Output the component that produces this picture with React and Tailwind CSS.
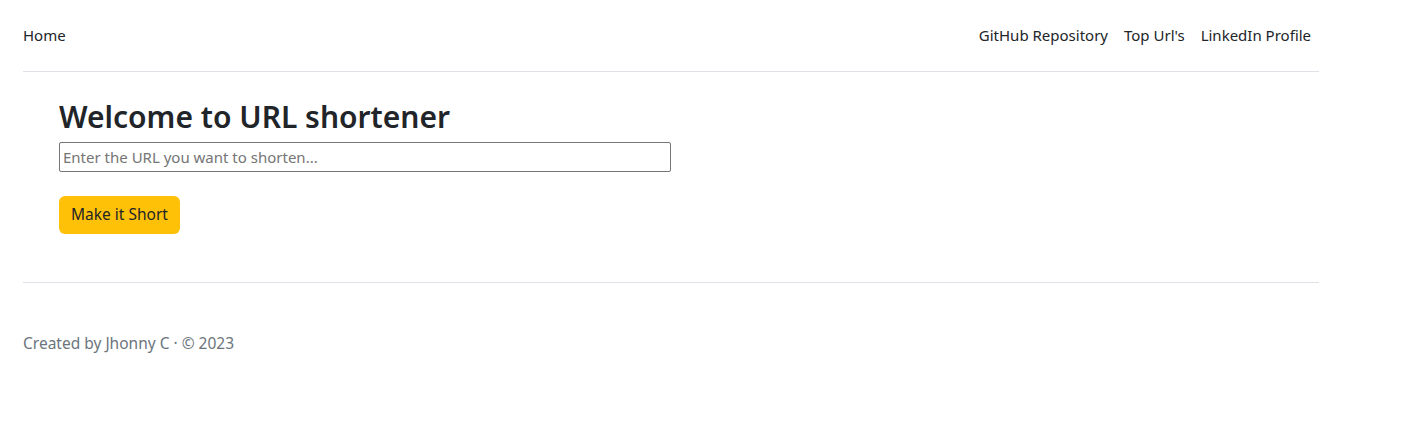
export default function App() {
  const font = { fontFamily: '"Noto Sans", "Open Sans", sans-serif' };
  return (
    <div className="min-h-[422px] bg-white text-[#212529]" style={font}>
      <div className="w-[1296px] ml-[23px]">
        <header className="flex items-center justify-between h-[72px] pb-[2px] border-b border-[#dee2e6] text-[15px]">
          <a className="leading-6">Home</a>
          <nav className="flex items-center gap-[16px] pr-[8px]">
            <a className="leading-6">GitHub Repository</a>
            <a className="leading-6">Top Url's</a>
            <a className="leading-6">LinkedIn Profile</a>
          </nav>
        </header>
        <main className="pl-[36px] pt-[26px] h-[210px]">
          <h1 className="text-[30px] font-semibold leading-[38px] mb-[6px]">Welcome to URL shortener</h1>
          <input
            className="block w-[612px] h-[30px] border border-[#767676] rounded-[2px] px-[3px] text-[15px] outline-none placeholder:text-[#757575]"
            placeholder="Enter the URL you want to shorten..."
          />
          <button className="mt-[24px] h-[38px] px-[12px] rounded-[6px] bg-[#ffc107] text-[15.5px] text-[#212529]">Make it Short</button>
        </main>
        <footer className="border-t border-[#dee2e6] pt-[48px]">
          <p className="text-[15.5px] leading-6 text-[#6c757d]">Created by Jhonny C · © 2023</p>
        </footer>
      </div>
    </div>
  );
}
